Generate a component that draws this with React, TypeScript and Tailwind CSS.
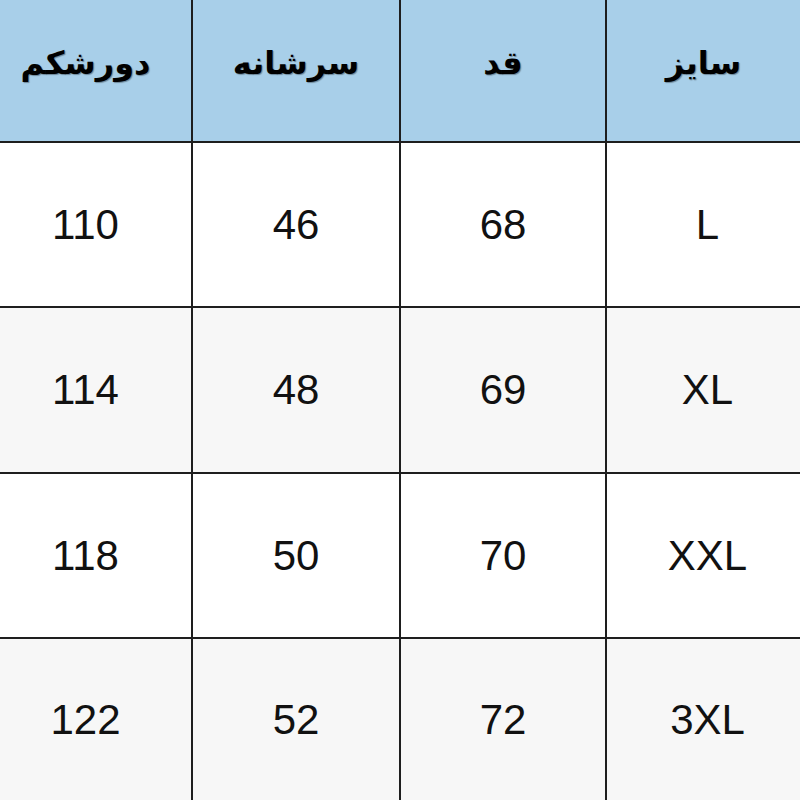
import React from "react";

const headers = ["سایز", "قد", "سرشانه", "دورشکم"];
const rows = [
  ["L", "68", "46", "110"],
  ["XL", "69", "48", "114"],
  ["XXL", "70", "50", "118"],
  ["3XL", "72", "52", "122"],
];

export default function App() {
  return (
    <div
      dir="rtl"
      className="w-[800px] h-[800px] overflow-hidden bg-white grid grid-cols-[195px_206px_208px_191px] grid-rows-[143px_165px_166px_165px_161px]"
    >
      {headers.map((h, i) => (
        <div
          key={h}
          className={`bg-[#a8cfe9] border-b-2 border-[#1e1e1e] flex items-center justify-center pb-[16px] ${i < 3 ? "border-l-2" : "pr-[20px]"}`}
        >
          <span
            className="text-[32px] font-bold text-black [text-shadow:1px_1px_1px_rgba(0,0,0,0.35)]"
            style={{ fontFamily: '"DejaVu Sans", sans-serif' }}
          >
            {h}
          </span>
        </div>
      ))}
      {rows.map((r, ri) =>
        r.map((c, ci) => (
          <div
            key={`${ri}-${ci}`}
            className={`flex items-center justify-center border-[#1e1e1e] ${ri % 2 === 1 ? "bg-[#f7f7f7]" : "bg-white"} ${ci < 3 ? "border-l-2" : "pr-[20px]"} ${ci === 0 ? "pl-[8px]" : ""} ${ri < 3 ? "border-b-2" : ""}`}
          >
            <span
              className="text-[42px] text-[#111] leading-none"
              style={{ fontFamily: '"Liberation Sans", Arial, sans-serif' }}
            >
              {c}
            </span>
          </div>
        ))
      )}
    </div>
  );
}
